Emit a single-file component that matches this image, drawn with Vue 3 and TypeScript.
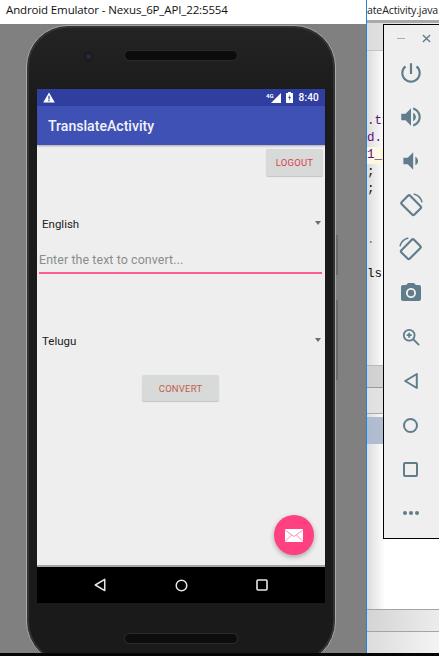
<script setup lang="ts">
interface CodeLine { text: string; tone?: string; hl?: boolean }
const codeLines: CodeLine[] = [
  { text: '.txt', tone: 'purple' },
  { text: 'd.txt', tone: 'purple' },
  { text: '1_FR', tone: 'purple', hl: true },
  { text: ';' },
  { text: ';' },
  { text: '' },
  { text: '' },
  { text: '.', tone: 'grey' },
  { text: '' },
  { text: 'ls(' },
]
</script>

<template>
  <div class="desktop">
    <div class="windows">
      <section class="emulator">
        <header class="emu-title">Android Emulator - Nexus_6P_API_22:5554</header>
        <div class="stage">
          <div class="phone">
            <i class="side-key key-a"></i>
            <i class="side-key key-b"></i>
            <div class="bezel-top">
              <span class="camera"></span>
              <span class="speaker"></span>
            </div>
            <div class="screen">
              <div class="status">
                <svg class="warn" viewBox="0 0 12 11"><path d="M6 0.5 11.8 10.5H0.2Z" fill="#fff" /><path d="M5.4 3.8h1.2v3.6H5.4zM5.4 8h1.2v1.2H5.4z" fill="#303f9f" /></svg>
                <span class="status-right">
                  <span class="net">4G</span>
                  <svg class="signal" viewBox="0 0 10 10"><path d="M10 0V10H0Z" fill="#fff" /></svg>
                  <svg class="battery" viewBox="0 0 7 11"><path d="M2 0h3v1h1.5a.5.5 0 0 1 .5.5v9a.5.5 0 0 1-.5.5h-6a.5.5 0 0 1-.5-.5v-9a.5.5 0 0 1 .5-.5H2Z" fill="#fff" /><path d="M4 2.5 2.2 6H3.4L3 8.8 5 5H3.7Z" fill="#303f9f" /></svg>
                  <span class="clock">8:40</span>
                </span>
              </div>
              <div class="toolbar">TranslateActivity</div>
              <div class="content">
                <button class="btn logout" type="button">LOGOUT</button>
                <div class="spinner first">
                  <span>English</span><i class="caret"></i>
                </div>
                <div class="field">Enter the text to convert...</div>
                <div class="spinner second">
                  <span>Telugu</span><i class="caret"></i>
                </div>
                <button class="btn convert" type="button">CONVERT</button>
                <div class="fab">
                  <svg viewBox="0 0 18 13" width="18" height="13">
                    <rect width="18" height="13" rx="1" fill="#fff" />
                    <path d="M0.5 1.5 9 7.5 17.5 1.5M0.5 12 6.5 6M17.5 12 11.5 6" fill="none" stroke="#ff8fb5" stroke-width="1" />
                  </svg>
                </div>
              </div>
              <nav class="navbar">
                <svg viewBox="0 0 14 16" width="12" height="14"><path d="M12.5 1.5V14.5L1.5 8Z" fill="none" stroke="#e6e6e6" stroke-width="1.8" stroke-linejoin="round" /></svg>
                <svg viewBox="0 0 14 14" width="13" height="13"><circle cx="7" cy="7" r="5.7" fill="none" stroke="#e6e6e6" stroke-width="1.6" /></svg>
                <svg viewBox="0 0 12 12" width="12" height="12"><rect x="1" y="1" width="10" height="10" rx="1" fill="none" stroke="#e6e6e6" stroke-width="1.6" /></svg>
              </nav>
            </div>
            <div class="bezel-bottom"><span class="speaker"></span></div>
          </div>
        </div>
      </section>

      <section class="ide">
        <div class="ide-tab">ateActivity.java</div>
        <div class="ide-toolbar"></div>
        <div class="code">
          <div v-for="(line, i) in codeLines" :key="i" class="code-line" :class="[line.tone, { hl: line.hl }]">{{ line.text }}</div>
        </div>
        <div class="pane-head"></div>
        <div class="pane-gap"></div>
        <div class="pane-selected"></div>
        <div class="pane-blank"></div>
        <div class="status-strip"></div>
        <div class="status-strip last"></div>
      </section>

      <aside class="tools">
        <div class="tools-head">
          <span class="minimize"></span>
          <svg viewBox="0 0 10 10" width="9" height="9"><path d="M1 1 9 9M9 1 1 9" stroke="#607d8b" stroke-width="1.5" /></svg>
        </div>
        <div class="tool"><svg viewBox="0 0 24 24" width="26" height="26"><path d="M13 3h-2v10h2V3zm4.83 2.17l-1.42 1.42C17.99 7.86 19 9.81 19 12c0 3.87-3.13 7-7 7s-7-3.13-7-7c0-2.19 1.01-4.14 2.58-5.42L6.17 5.17C4.23 6.82 3 9.26 3 12c0 4.97 4.03 9 9 9s9-4.03 9-9c0-2.74-1.23-5.18-3.17-6.83z" /></svg></div>
        <div class="tool"><svg viewBox="0 0 24 24" width="26" height="26"><path d="M3 9v6h4l5 5V4L7 9H3zm13.5 3c0-1.77-1.02-3.29-2.5-4.03v8.05c1.48-.73 2.5-2.25 2.5-4.02zM14 3.23v2.06c2.89.86 5 3.54 5 6.71s-2.11 5.85-5 6.71v2.06c4.01-.91 7-4.49 7-8.77s-2.99-7.86-7-8.77z" /></svg></div>
        <div class="tool"><svg viewBox="0 0 24 24" width="26" height="26"><path d="M18.5 12c0-1.77-1.02-3.29-2.5-4.03v8.05c1.48-.73 2.5-2.25 2.5-4.02zM5 9v6h4l5 5V4L9 9H5z" /></svg></div>
        <div class="tool"><svg class="line" viewBox="0 0 24 24" width="26" height="26"><rect x="6.5" y="4" width="11" height="16.5" rx="1.5" transform="rotate(-45 12 12)" /><path d="M14.5 1.8A10.5 10.5 0 0 1 22.2 9.5" stroke-width="1.4" /></svg></div>
        <div class="tool"><svg class="line" viewBox="0 0 24 24" width="26" height="26"><rect x="6.5" y="4" width="11" height="16.5" rx="1.5" transform="rotate(45 12 12)" /><path d="M9.5 1.8A10.5 10.5 0 0 0 1.8 9.5" stroke-width="1.4" /></svg></div>
        <div class="tool"><svg viewBox="0 0 24 24" width="24" height="24"><path d="M9 2L7.17 4H4c-1.1 0-2 .9-2 2v12c0 1.1.9 2 2 2h16c1.1 0 2-.9 2-2V6c0-1.1-.9-2-2-2h-3.17L15 2H9zm3 15c-2.76 0-5-2.24-5-5s2.24-5 5-5 5 2.24 5 5-2.24 5-5 5z" /><circle cx="12" cy="12" r="3.2" /></svg></div>
        <div class="tool"><svg class="line" viewBox="0 0 20 20" width="18" height="18"><circle cx="8" cy="8" r="6" /><path d="M12.5 12.5 19 19M8 5.2V10.8M5.2 8H10.8" /></svg></div>
        <div class="tool"><svg class="line" viewBox="0 0 14 16" width="14" height="16"><path d="M12.8 1V15L1.2 8Z" stroke-linejoin="round" /></svg></div>
        <div class="tool"><svg class="line" viewBox="0 0 15 15" width="15" height="15"><circle cx="7.5" cy="7.5" r="6.5" /></svg></div>
        <div class="tool"><svg class="line" viewBox="0 0 15 15" width="15" height="15"><rect x="1" y="1" width="13" height="13" rx="1" /></svg></div>
        <div class="tool"><svg viewBox="0 0 16 4" width="16" height="4"><circle cx="2" cy="2" r="2" /><circle cx="8" cy="2" r="2" /><circle cx="14" cy="2" r="2" /></svg></div>
      </aside>
    </div>
    <div class="taskbar"></div>
  </div>
</template>

<style>
html, body { margin: 0; background: #000; }
</style>

<style scoped>
.desktop {
  width: 439px;
  height: 656px;
  display: flex;
  flex-direction: column;
  overflow: hidden;
}
.windows {
  position: relative;
  flex: 0 0 653px;
  height: 653px;
  display: flex;
  overflow: hidden;
}
.taskbar { flex: 0 0 3px; background: #050505; }

.emulator {
  flex: 0 0 366px;
  display: flex;
  flex-direction: column;
  border-right: 1px solid #1c86e0;
  width: 366px;
}
.emu-title {
  flex: 0 0 24px;
  background: #fff;
  color: #111;
  font: 11.5px/19px "Open Sans", sans-serif;
  letter-spacing: -0.13px;
  padding-left: 6px;
  white-space: nowrap;
}
.stage {
  flex: 1;
  min-height: 0;
  background: #808080;
  padding: 1px 0 0 26px;
}

.phone {
  position: relative;
  width: 310px;
  height: 640px;
  box-sizing: border-box;
  border-radius: 42px 42px 44px 44px;
  background: linear-gradient(#242424 0, #1b1b1b 70px, #1a1a1a 100%);
  border: 1px solid #a8a8a8;
  box-shadow: inset 0 0 0 2px #333;
  display: flex;
  flex-direction: column;
  align-items: center;
}
.side-key {
  position: absolute;
  right: -3px;
  width: 2px;
  background: #6a6a6a;
}
.key-a { top: 209px; height: 40px; }
.key-b { top: 274px; height: 80px; }

.bezel-top {
  flex: 0 0 63px;
  width: 100%;
  display: flex;
  align-items: flex-start;
  padding: 25px 0 0 57px;
  box-sizing: border-box;
  gap: 32px;
}
.camera {
  width: 9px;
  height: 9px;
  margin-top: 1px;
  border-radius: 50%;
  background: radial-gradient(circle, #3c2c44 0, #16151c 70%);
}
.speaker {
  display: block;
  width: 112px;
  height: 9px;
  border-radius: 5px;
  background: #0c0c0c;
  box-shadow: 0 0 0 1px #2a2a2a;
}

.screen {
  flex: 0 0 514px;
  width: 288px;
  display: flex;
  flex-direction: column;
  font-family: Roboto, sans-serif;
}
.status {
  flex: 0 0 17px;
  background: #303f9f;
  display: flex;
  align-items: center;
  justify-content: space-between;
  padding: 0 6px 0 6px;
}
.warn { width: 12px; height: 11px; }
.status-right { display: flex; align-items: center; }
.net { color: #fff; font-size: 6px; font-weight: 700; margin-right: -3px; margin-top: -5px; }
.signal { width: 10px; height: 10px; margin-right: 5px; }
.battery { width: 7px; height: 11px; margin-right: 6px; }
.clock { color: #fff; font-size: 10px; font-weight: 500; letter-spacing: 0.2px; }
.toolbar {
  flex: 0 0 39px;
  box-sizing: border-box;
  background: #3f51b5;
  color: #f2f3fa;
  font-size: 14.1px;
  font-weight: 500;
  line-height: 37px;
  padding: 2px 0 0 11px;
  box-shadow: 0 1px 2px rgba(0, 0, 0, 0.3);
  position: relative;
  z-index: 1;
}
.content {
  position: relative;
  flex: 1;
  min-height: 0;
  background: #eeeeee;
  display: flex;
  flex-direction: column;
  border-bottom: 2px solid #a6a6a6;
}
.btn {
  border: 0;
  border-radius: 2px;
  background: #d8d9d9;
  font-family: Roboto, sans-serif;
  font-size: 9.5px;
  padding: 0;
  letter-spacing: 0.2px;
  box-shadow: 0 1px 1px rgba(0, 0, 0, 0.18);
}
.logout {
  align-self: flex-end;
  width: 57px;
  height: 27px;
  margin: 4px 2px 0 0;
  color: #d8434e;
}
.convert {
  align-self: center;
  width: 77px;
  height: 26px;
  margin: 24px 1px 0 0;
  color: #c1604a;
}
.spinner {
  height: 20px;
  box-sizing: border-box;
  display: flex;
  align-items: center;
  justify-content: space-between;
  padding: 0 4px 0 5px;
  color: #222;
  font-size: 11.5px;
}
.spinner.first { margin-top: 38px; }
.spinner.second { margin-top: 57px; }
.caret {
  width: 0;
  height: 0;
  border-left: 3.5px solid transparent;
  border-right: 3.5px solid transparent;
  border-top: 4px solid #6d6d6d;
  margin-top: -2px;
}
.field {
  height: 22px;
  margin: 16px 3px 0 2px;
  border-bottom: 2px solid #ff5c8d;
  color: #8c8c8c;
  font-size: 12.4px;
  line-height: 20px;
  letter-spacing: 0.1px;
  white-space: nowrap;
}
.fab {
  position: absolute;
  left: 237px;
  bottom: 10px;
  width: 40px;
  height: 40px;
  border-radius: 50%;
  background: #ff4081;
  box-shadow: 0 2px 5px rgba(0, 0, 0, 0.3);
  display: flex;
  align-items: center;
  justify-content: center;
}
.navbar {
  flex: 0 0 36px;
  background: #000;
  display: flex;
  align-items: center;
  justify-content: space-between;
  padding: 0 57px 0 57px;
}
.bezel-bottom {
  flex: 1;
  width: 100%;
  display: flex;
  justify-content: center;
  padding-top: 31px;
  box-sizing: border-box;
}

.ide {
  flex: 1;
  min-width: 0;
  display: flex;
  flex-direction: column;
  overflow: hidden;
  background: linear-gradient(90deg, #dcdcdc 0, #f7f7f7 14px, #fff 18px);
}
.ide-tab {
  flex: 0 0 20px;
  font: 10.6px/20px "Open Sans", sans-serif;
  letter-spacing: -0.15px;
  color: #222;
  white-space: nowrap;
  background: #fff;
}
.ide-toolbar {
  flex: 0 0 27px;
  margin-bottom: 2px;
  background: linear-gradient(90deg, #dcdcdc, #f0f0f0);
  border-top: 3px solid #a9a9a9;
  border-bottom: 1px solid #c4c4c4;
}
.code {
  flex: 0 0 312px;
  padding-top: 60px;
  box-sizing: border-box;
}
.code-line {
  height: 17px;
  font: 12.5px/17px "Liberation Mono", monospace;
  color: #111;
  white-space: nowrap;
}
.code-line.purple { color: #660e7a; }
.code-line.grey { color: #777; }
.code-line.hl { background: #fdf8e2; }
.pane-head {
  flex: 0 0 21px;
  border-top: 1px solid #bbb;
  border-bottom: 1px solid #9a9a9a;
  background: linear-gradient(90deg, #cfcfcf, #e6e6e6);
}
.pane-gap { flex: 0 0 25px; background: linear-gradient(90deg, #dfdfdf, #f2f2f2); border-bottom: 1px solid #aaa; }
.pane-selected { flex: 0 0 27px; margin-top: 3px; background: linear-gradient(90deg, #aebbcf, #bfc9d9); }
.pane-blank { flex: 1; }
.status-strip {
  flex: 0 0 21px;
  border-top: 1px solid #a4a4a4;
  background: linear-gradient(90deg, #d4d4d4, #ececec);
}
.status-strip.last { background: linear-gradient(90deg, #dcdcdc, #f4f4f4); }

.tools {
  position: absolute;
  left: 383px;
  top: 24px;
  width: 70px;
  height: 515px;
  box-sizing: border-box;
  border: 1px solid #000;
  background: #efefef;
  display: flex;
  flex-direction: column;
  align-items: stretch;
  padding-right: 15px;
}
.tools-head {
  flex: 0 0 25px;
  display: flex;
  align-items: center;
  justify-content: flex-start;
  padding: 1px 0 0 13px;
  gap: 17px;
}
.minimize { width: 8px; height: 1.5px; background: #9fb1ba; }
.tool {
  flex: 0 0 44px;
  display: flex;
  align-items: center;
  justify-content: center;
}
.tool svg { fill: #607d8b; }
.tool svg.line { fill: none; stroke: #607d8b; stroke-width: 2; }
</style>
